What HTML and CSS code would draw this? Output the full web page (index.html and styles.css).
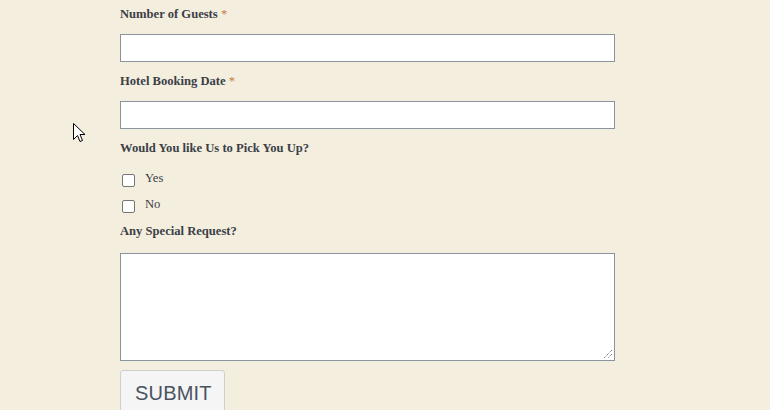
FILE: index.html
```html
<!DOCTYPE html>
<html>
<head>
<meta charset="utf-8">
<link rel="stylesheet" href="styles.css">
</head>
<body>
<form class="form">
  <label class="lbl">Number of Guests <span class="req">*</span></label>
  <input class="txt" type="text">
  <label class="lbl">Hotel Booking Date <span class="req">*</span></label>
  <input class="txt" type="text">
  <label class="lbl">Would You like Us to Pick You Up?</label>
  <div class="opts">
    <div class="opt"><span class="box"></span><span class="opt-text">Yes</span></div>
    <div class="opt"><span class="box"></span><span class="opt-text">No</span></div>
  </div>
  <label class="lbl">Any Special Request?</label>
  <div class="area"><svg class="grip" width="10" height="10" viewBox="0 0 10 10"><path d="M9 1 L1 9 M9 5 L5 9" stroke="#555" stroke-width="1" stroke-dasharray="1 1" fill="none"/></svg></div>
  <div class="btn">SUBMIT</div>
</form>
<svg class="cursor" width="13" height="20" viewBox="0 0 13 20"><path d="M0.5 0.5 L0.5 16.5 L4.5 12.5 L7 18.5 L9.5 17.5 L7 11.5 L12 11.5 Z" fill="#fff" stroke="#000" stroke-width="1"/></svg>
</body>
</html>
```
FILE: styles.css
```css
html, body { margin: 0; padding: 0; }
body {
  background: #f4eedf;
  width: 770px;
  height: 410px;
  overflow: hidden;
  position: relative;
  font-family: "Liberation Serif", serif;
}
.form {
  display: flex;
  flex-direction: column;
  align-items: flex-start;
  padding: 5px 0 0 120px;
}
.lbl {
  display: block;
  font-size: 12.6px;
  font-weight: bold;
  line-height: 18px;
  color: #3b3f46;
  margin-bottom: 11px;
}
.req { color: #c57a3f; font-weight: normal; }
.txt {
  box-sizing: border-box;
  width: 495px;
  height: 28px;
  margin: 0 0 10px 0;
  border: 1px solid #8a949e;
  background: #fff;
  padding: 0;
  outline: none;
}
.opts {
  display: flex;
  flex-direction: column;
  margin: -1px 0 3px 0;
}
.opt {
  display: flex;
  align-items: center;
  height: 26px;
}
.box {
  box-sizing: border-box;
  width: 13px;
  height: 13px;
  margin-left: 2px;
  margin-top: 1px;
  border: 1px solid #767676;
  border-radius: 2px;
  background: #fff;
}
.opt-text {
  margin-left: 10px;
  font-size: 12.6px;
  color: #3b3f46;
  margin-top: -4px;
}
.area {
  box-sizing: border-box;
  width: 495px;
  height: 108px;
  margin-top: 2px;
  border: 1px solid #8a949e;
  background: #fff;
  position: relative;
  margin-bottom: 9px;
}
.grip { position: absolute; right: 1px; bottom: 1px; }
.btn {
  box-sizing: border-box;
  width: 105px;
  height: 50px;
  border: 1px solid #cfcfcf;
  border-radius: 3px;
  background: #f5f5f5;
  font-family: "Liberation Sans", sans-serif;
  font-size: 20px;
  color: #4a5360;
  padding: 11px 0 0 14px;
  letter-spacing: 0.2px;
}
.cursor { position: absolute; left: 73px; top: 123px; }
```
